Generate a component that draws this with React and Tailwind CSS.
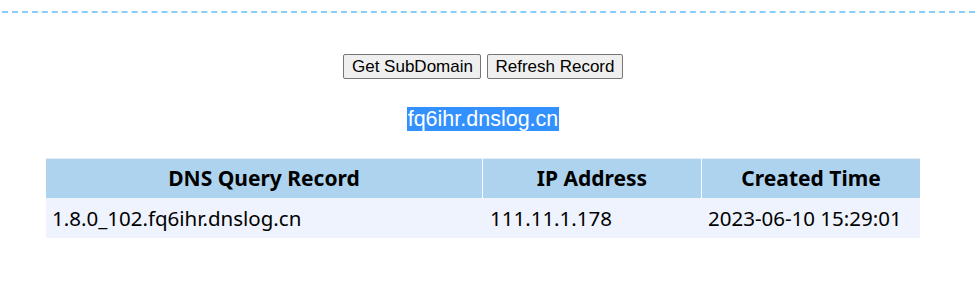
export default function App() {
  const rows = [
    { domain: "1.8.0_102.fq6ihr.dnslog.cn", ip: "111.11.1.178", time: "2023-06-10 15:29:01" },
  ];

  return (
    <div className="w-[975px] h-[282px] bg-white overflow-hidden">
      <div className="pt-[11px] pl-[2px]">
        <div className="border-t-2 border-dashed border-[#87cefa]"></div>
      </div>

      <div className="w-[966px]">
        <div className="flex justify-center gap-[6px] mt-[41px]">
          <button className="h-[25px] px-[7.5px] bg-[#efefef] border border-[#767676] rounded-[2px] text-[17px] leading-none text-black font-['Liberation_Sans',Arial,sans-serif]">
            Get SubDomain
          </button>
          <button className="h-[25px] px-[7px] bg-[#efefef] border border-[#767676] rounded-[2px] text-[17px] leading-none text-black font-['Liberation_Sans',Arial,sans-serif]">
            Refresh Record
          </button>
        </div>

        <div className="flex justify-center mt-[28px]">
          <span className="bg-[#3390ff] text-white text-[21.5px] leading-[24px] px-[1px] font-['Liberation_Sans',Arial,sans-serif]">
            fq6ihr.dnslog.cn
          </span>
        </div>
      </div>

      <div className="mt-[27px] ml-[46px] w-[874px] font-['Noto_Sans',sans-serif] text-[20.5px] text-black">
        <div className="grid grid-cols-[437px_219px_218px] bg-[#aed3ef] h-[40px] border-t border-[#e8eef8] text-[21px]">
          <div className="flex items-center justify-center font-bold border-r border-white">DNS Query Record</div>
          <div className="flex items-center justify-center font-bold border-r border-white">IP Address</div>
          <div className="flex items-center justify-center font-bold">Created Time</div>
        </div>
        {rows.map((r) => (
          <div key={r.domain} className="grid grid-cols-[437px_219px_218px] bg-[#eef3fd] h-[40px]">
            <div className="flex items-center pl-[6px]">{r.domain}</div>
            <div className="flex items-center pl-[7px]">{r.ip}</div>
            <div className="flex items-center pl-[6px]">{r.time}</div>
          </div>
        ))}
      </div>
    </div>
  );
}
